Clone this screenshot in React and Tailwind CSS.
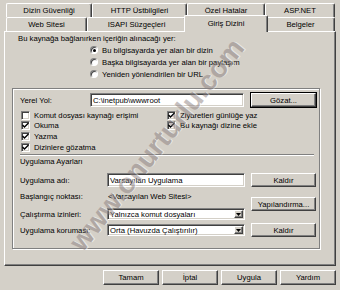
const raised =
  'bg-[#d4d0c8] border border-t-white border-l-white border-r-[#404040] border-b-[#404040] shadow-[inset_-1px_-1px_0_#808080]';
const sunken =
  'bg-white border border-t-[#808080] border-l-[#808080] border-r-white border-b-white shadow-[inset_1px_1px_0_#404040,inset_-1px_-1px_0_#d4d0c8]';

function Tab({ w, label, active }) {
  if (active) {
    return (
      <div
        className="relative z-10 -mx-[2px] -mt-[2px] h-[17px] shrink-0 bg-[#d4d0c8] border-l border-t border-r border-t-white border-l-white border-r-[#404040] rounded-t-[2px] shadow-[inset_-1px_0_0_#808080] flex items-start justify-center pt-[3px] leading-[9px]"
        style={{ width: w + 4 }}
      >
        {label}
      </div>
    );
  }
  return (
    <div
      className="h-[14px] shrink-0 border-l border-t border-r border-t-white border-l-white border-r-[#404040] rounded-t-[2px] shadow-[inset_-1px_0_0_#808080] flex items-center justify-center leading-[9px]"
      style={{ width: w }}
    >
      {label}
    </div>
  );
}

function Button({ children, className = '' }) {
  return (
    <div className={`${raised} flex items-center justify-center leading-[9px] ${className}`}>
      {children}
    </div>
  );
}

function Radio({ checked, label }) {
  return (
    <div className="h-[12px] flex items-center">
      <div className="w-[8px] h-[8px] rounded-full bg-white border border-t-[#808080] border-l-[#808080] border-r-white border-b-white shadow-[inset_1px_1px_0_#404040] flex items-center justify-center">
        {checked && <div className="w-[3px] h-[3px] rounded-full bg-black" />}
      </div>
      <span className="ml-[4px] leading-[9px]">{label}</span>
    </div>
  );
}

function Check({ checked, label }) {
  return (
    <div className="h-[10.6px] flex items-center">
      <div className={`w-[9px] h-[9px] ${sunken} flex items-center justify-center`}>
        {checked && (
          <svg width="7" height="7" viewBox="0 0 7 7">
            <polyline points="0.5,3 2.5,5 6.5,1" fill="none" stroke="#000" strokeWidth="1.4" />
          </svg>
        )}
      </div>
      <span className="ml-[4px] leading-[9px]">{label}</span>
    </div>
  );
}

function Select({ value }) {
  return (
    <div className={`w-[138px] h-[12px] ${sunken} flex items-center pl-[2px] pr-[1px]`}>
      <span className="flex-1 leading-[9px]">{value}</span>
      <div className={`w-[9px] h-[8px] ${raised} flex items-center justify-center`}>
        <svg width="5" height="3" viewBox="0 0 5 3">
          <polygon points="0,0 5,0 2.5,3" fill="#000" />
        </svg>
      </div>
    </div>
  );
}

export default function App() {
  return (
    <div
      className="relative w-[340px] h-[290px] overflow-hidden bg-[#d4d0c8] text-black text-[7.7px]"
      style={{ fontFamily: '"Liberation Sans", Arial, sans-serif' }}
    >
      {/* Tabs */}
      <div className="pt-[3px] pl-[6px]">
        <div className="flex">
          <Tab w={86} label="Dizin Güvenliği" />
          <Tab w={95} label="HTTP Üstbilgileri" />
          <Tab w={78} label="Özel Hatalar" />
          <Tab w={70} label="ASP.NET" />
        </div>
        <div className="flex h-[14px] items-start">
          <Tab w={81} label="Web Sitesi" />
          <Tab w={99} label="ISAPI Süzgeçleri" />
          <Tab w={80} label="Giriş Dizini" active />
          <Tab w={69} label="Belgeler" />
        </div>
      </div>

      {/* Panel */}
      <div className="ml-[4px] w-[332px] h-[235px] border border-t-white border-l-white border-r-[#404040] border-b-[#404040] shadow-[inset_-1px_-1px_0_#808080] flex flex-col">
        <div className="mt-[1px] h-[11px] leading-[11px] pl-[13px]">
          Bu kaynağa bağlanırken içeriğin alınacağı yer:
        </div>
        <div className="pl-[85px] flex flex-col">
          <Radio checked label="Bu bilgisayarda yer alan bir dizin" />
          <Radio label="Başka bilgisayarda yer alan bir paylaşım" />
          <Radio label="Yeniden yönlendirilen bir URL" />
        </div>

        {/* Frame */}
        <div className="mt-[8px] ml-[7px] w-[308px] h-[161px] border border-[#808080] shadow-[inset_1px_1px_0_#fff,1px_1px_0_#fff] flex flex-col">
          <div className="mt-[4px] h-[14px] pl-[7px] flex items-center">
            <span className="w-[70px] leading-[9px]">Yerel Yol:</span>
            <div className={`w-[154px] h-[14px] ${sunken} flex items-center pl-[2px] leading-[9px]`}>
              C:\inetpub\wwwroot
            </div>
            <Button className="ml-[7px] w-[65px] h-[14px] outline outline-1 outline-black -outline-offset-0">
              Gözat...
            </Button>
          </div>

          <div className="mt-[3px] h-[43px] pl-[8px] flex">
            <div className="w-[146px] flex flex-col">
              <Check label="Komut dosyası kaynağı erişimi" />
              <Check checked label="Okuma" />
              <Check checked label="Yazma" />
              <Check checked label="Dizinlere gözatma" />
            </div>
            <div className="flex flex-col">
              <Check checked label="Ziyaretleri günlüğe yaz" />
              <Check checked label="Bu kaynağı dizine ekle" />
            </div>
          </div>

          <div className="mt-[1px] ml-[7px] w-[294px] h-[2px] border-t border-t-[#808080] border-b border-b-white" />
          <div className="h-[11px] leading-[11px] pl-[7px]">Uygulama Ayarları</div>

          <div className="mt-[6px] pl-[7px] flex">
            <div className="w-[225px] flex flex-col">
              <div className="h-[14px] flex items-center">
                <span className="w-[87px] leading-[9px]">Uygulama adı:</span>
                <div className={`w-[138px] h-[14px] ${sunken} flex items-center pl-[2px] leading-[9px]`}>
                  Varsayılan Uygulama
                </div>
              </div>
              <div className="mt-[3px] h-[12px] flex items-center">
                <span className="w-[88px] leading-[9px]">Başlangıç noktası:</span>
                <span className="leading-[9px]">&lt;Varsayılan Web Sitesi&gt;</span>
              </div>
              <div className="mt-[6px] h-[12px] flex items-center">
                <span className="w-[87px] leading-[9px]">Çalıştırma izinleri:</span>
                <Select value="Yalnızca komut dosyaları" />
              </div>
              <div className="mt-[4px] h-[12px] flex items-center">
                <span className="w-[87px] leading-[9px]">Uygulama koruması:</span>
                <Select value="Orta (Havuzda Çalıştırılır)" />
              </div>
            </div>
            <div className="ml-[6px] w-[65px] flex flex-col">
              <Button className="h-[14px]">Kaldır</Button>
              <Button className="mt-[10px] h-[14px]">Yapılandırma...</Button>
              <Button className="mt-[12px] h-[14px]">Kaldır</Button>
            </div>
          </div>
        </div>
      </div>

      {/* Dialog buttons */}
      <div className="mt-[4px] pr-[4px] flex justify-end gap-[3px]">
        <Button className="w-[56px] h-[15px]">Tamam</Button>
        <Button className="w-[56px] h-[15px]">İptal</Button>
        <Button className="w-[56px] h-[15px]">Uygula</Button>
        <Button className="w-[56px] h-[15px]">Yardım</Button>
      </div>

      {/* Watermark */}
      <div
        className="pointer-events-none absolute left-[157px] top-[145px] whitespace-nowrap text-[28px] font-bold text-[#8c8080] opacity-50 [text-shadow:1px_1px_0_#ffffff]"
        style={{ transform: 'translate(-50%, -50%) rotate(-51.5deg)' }}
      >
        www.onurturlu.com
      </div>
    </div>
  );
}
